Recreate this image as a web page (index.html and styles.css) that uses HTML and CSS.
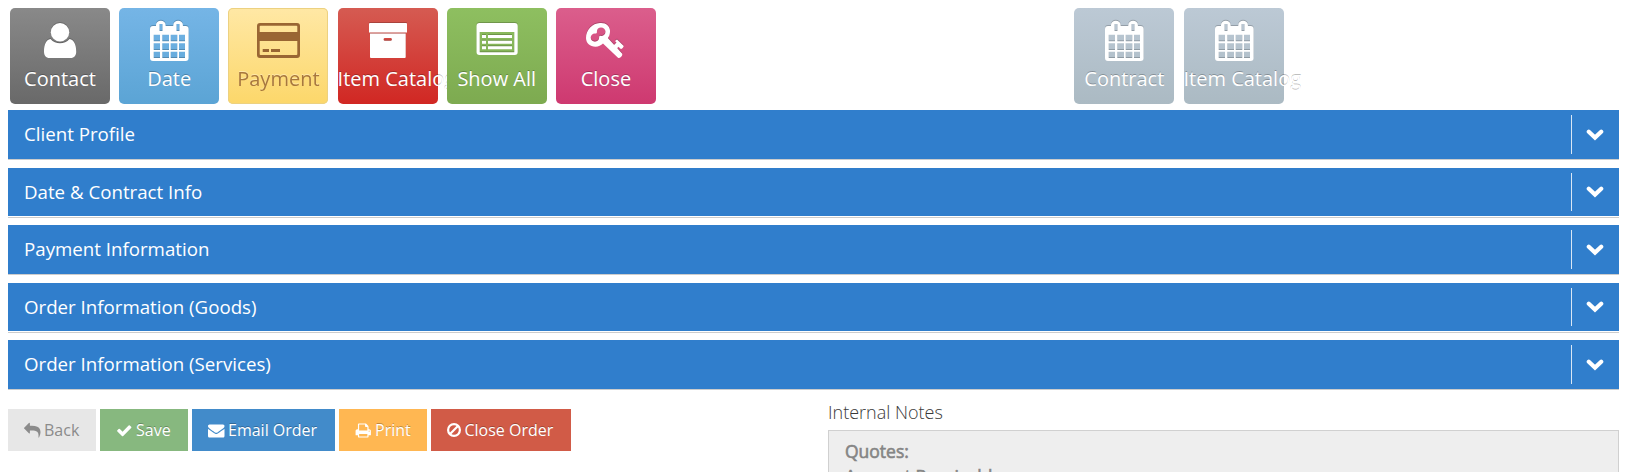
FILE: index.html
```
<!DOCTYPE html>
<html lang="en">
<head>
    <meta charset="UTF-8">
    <meta name="viewport" content="width=device-width, initial-scale=1.0">
    <title>Order</title>
    <link rel="stylesheet" href="styles.css">
</head>
<body>
    <!-- shared icons -->
    <svg class="icons">
        <symbol id="calendar" viewBox="0 0 48 42">
            <path fill-rule="evenodd" d="M8 6h3V5a4.800 4.200 0 0 1 9.600 0V6h7.700V5a4.800 4.200 0 0 1 9.600 0V6h2.700a3 3 0 0 1 3 3v29a3 3 0 0 1-3 3H8a3 3 0 0 1-3-3V9a3 3 0 0 1 3-3zM14.500 4v7h3V4zM31.500 4v7h3V4zM8.700 14.700v6.600H15v-6.600zM17.300 14.700v6.600H24v-6.600zM25.700 14.700v6.600h6.600v-6.600zM34 14.700v6.600h6v-6.600zM8.700 23.300V30H15v-6.700zM17.300 23.300V30H24v-6.700zM25.700 23.300V30h6.600v-6.700zM34 23.300V30h6v-6.700zM8.700 31.700V38H15v-6.300zM17.300 31.700V38H24v-6.300zM25.700 31.700V38h6.600v-6.300zM34 31.700V38h6v-6.300z"/>
        </symbol>
        <symbol id="chevron" viewBox="0 0 18 12">
            <path d="M2.800 2.800L9 8.600l6.200-5.800" fill="none" stroke="#fff" stroke-width="4.200" stroke-linecap="round"/>
        </symbol>
    </svg>

    <div class="toolbar">
        <button class="app grey">
            <svg viewBox="0 0 48 42"><circle cx="24" cy="12.300" r="9.200"/><path d="M14.500 19c2.500 3.200 6 4.200 9.500 4.200s7-1 9.500-4.200c4.500.8 6.700 5.500 6.700 12.500 0 4-2 6.500-5.500 6.500H13.500C10 38 8 35.500 8 31.500 8 24.500 10 19.800 14.500 19z"/></svg>
            <span>Contact</span>
        </button>
        <button class="app blue">
            <svg><use href="#calendar"/></svg>
            <span>Date</span>
        </button>
        <button class="app yellow">
            <svg viewBox="0 0 48 42"><path fill-rule="evenodd" d="M6 3h37a3 3 0 0 1 3 3v29a3 3 0 0 1-3 3H6a3 3 0 0 1-3-3V6a3 3 0 0 1 3-3zM6.500 5.800a.8.800 0 0 0-.8.800V12h37.600V6.600a.8.800 0 0 0-.8-.8zM5.700 21v13.200a.8.800 0 0 0 .8.800h36a.8.800 0 0 0 .8-.8V21zM8.700 29h6.300v3H8.700zM17 29h9v3h-9z"/></svg>
            <span>Payment</span>
        </button>
        <button class="app red">
            <svg viewBox="0 0 48 42"><path fill-rule="evenodd" d="M6 3h36a1 1 0 0 1 1 1v8.500H5V4a1 1 0 0 1 1-1zM6 13.500h35.700V37a1 1 0 0 1-1 1H7a1 1 0 0 1-1-1zM21 18a1.400 1.400 0 0 0 0 2.800h5.500a1.400 1.400 0 0 0 0-2.800z"/></svg>
            <span>Item Catalog</span>
        </button>
        <button class="app green">
            <svg viewBox="0 0 48 42"><path fill-rule="evenodd" d="M6.500 3h35.200a3 3 0 0 1 3 3v26a3 3 0 0 1-3 3H6.500a3 3 0 0 1-3-3V6a3 3 0 0 1 3-3zM6.700 12v20.300h34.600V12z"/><path d="M9 15h4v3H9zM15 15h24v3H15zM9 20.700h4v3H9zM15 20.700h24v3H15zM9 26.300h4v3H9zM15 26.300h24v3H15z"/></svg>
            <span>Show All</span>
        </button>
        <button class="app pink">
            <svg viewBox="0 0 48 42"><path fill-rule="evenodd" d="M18 3c6-.5 10.500 3.500 10 9-.2 2.700-1 4.500-2.200 6L40 33.500c1.300 1.800-2 5.300-4 4.300L21 23.500c-2 2-4.500 3.200-7.500 3.200C8 26.700 4 23 4 18 4 10 10.500 3.300 18 3zM19 7.500c-2.700 0-4.500 2-4 4.500-.2 1-.7 1.500-1.500 1.500-2.500-.4-4.800 1.500-4.800 4 0 2.300 1.800 4.200 4.200 4.200 2.800 0 4.500-1.800 4.200-4.500.2-1 .8-1.500 1.600-1.300 2.600.3 4.800-1.500 4.800-4.200 0-2.400-2-4.200-4.500-4.200z"/><path d="M29 28l5.500-5.500-1.500-1.500 2-1.500 6.500 6.300c.8.800-2 3.800-3 3l-2-2-1.500 1.500 1.300 1.500L34 32z"/></svg>
            <span>Close</span>
        </button>
        <div class="toolbar-right">
            <button class="app light">
                <svg><use href="#calendar"/></svg>
                <span>Contract</span>
            </button>
            <button class="app light">
                <svg><use href="#calendar"/></svg>
                <span>Item Catalog</span>
            </button>
        </div>
    </div>

    <div class="panels">
        <div class="panel">
            <h5>Client Profile</h5>
            <a class="toggle"><svg><use href="#chevron"/></svg></a>
        </div>
        <div class="panel short">
            <h5>Date &amp; Contract Info</h5>
            <a class="toggle"><svg><use href="#chevron"/></svg></a>
        </div>
        <div class="panel">
            <h5>Payment Information</h5>
            <a class="toggle"><svg><use href="#chevron"/></svg></a>
        </div>
        <div class="panel short">
            <h5>Order Information (Goods)</h5>
            <a class="toggle"><svg><use href="#chevron"/></svg></a>
        </div>
        <div class="panel">
            <h5>Order Information (Services)</h5>
            <a class="toggle"><svg><use href="#chevron"/></svg></a>
        </div>
    </div>

    <div class="footer">
        <div class="actions">
            <button class="btn back">
                <svg viewBox="0 0 1792 1792"><path d="M1792 1120q0 166-127 451-3 7-10.500 24t-13.500 30-13 22q-12 17-28 17-15 0-23.500-10t-8.500-25q0-9 2.500-26.500t2.500-23.500q5-68 5-123 0-101-17.500-181t-48.500-138.500-80-101-105.500-69.500-133-42.500-154-21.500-175.500-6h-224v256q0 26-19 45t-45 19-45-19l-512-512q-19-19-19-45t19-45l512-512q19-19 45-19t45 19 19 45v256h224q713 0 875 403 53 134 53 333z"/></svg>
                Back
            </button>
            <button class="btn save">
                <svg viewBox="0 0 1792 1792"><path d="M1671 566q0 40-28 68l-724 724-136 136q-28 28-68 28t-68-28l-136-136-362-362q-28-28-28-68t28-68l136-136q28-28 68-28t68 28l294 295 656-657q28-28 68-28t68 28l136 136q28 28 28 68z"/></svg>
                Save
            </button>
            <button class="btn email">
                <svg viewBox="0 0 1792 1792"><path d="M1792 710v794q0 66-47 113t-113 47h-1472q-66 0-113-47t-47-113v-794q44 49 101 87 362 246 497 345 57 42 92.500 65.500t94.500 48 110 24.500h2q51 0 110-24.500t94.500-48 92.500-65.500q170-123 498-345 57-39 100-87zm0-294q0 79-49 151t-122 123q-376 261-468 325-10 7-42.500 31t-54 38.500-52 32.500-57.500 27-50 9h-2q-23 0-50-9t-57.500-27-52-32.500-54-38.500-42.500-31q-91-64-262-182.500t-205-142.500q-62-42-117-115.500t-55-136.500q0-78 41.500-130t118.500-52h1472q65 0 112.500 47t47.500 113z"/></svg>
                Email Order
            </button>
            <button class="btn print">
                <svg viewBox="0 0 1792 1792"><path d="M448 1536h896v-256h-896v256zm0-640h896v-384h-160q-40 0-68-28t-28-68v-160h-640v640zm1152 64q0-26-19-45t-45-19-45 19-19 45 19 45 45 19 45-19 19-45zm128 0v416q0 13-9.500 22.500t-22.500 9.500h-224v160q0 40-28 68t-68 28h-960q-40 0-68-28t-28-68v-160h-224q-13 0-22.500-9.500t-9.500-22.500v-416q0-79 56.500-135.500t135.500-56.500h64v-544q0-40 28-68t68-28h672q40 0 88 20t76 48l152 152q28 28 48 76t20 88v256h64q79 0 135.500 56.500t56.500 135.500z"/></svg>
                Print
            </button>
            <button class="btn cancel">
                <svg viewBox="0 0 14 16"><g fill="none" stroke="#fff" stroke-width="2.200"><circle cx="7" cy="8" r="5.900"/><path d="M2.800 12.200l8.400-8.400"/></g></svg>
                Close Order
            </button>
        </div>
        <div class="notes">
            <label>Internal Notes</label>
            <div class="notes-box">
                Quotes:<br>
                Account Receivable:
            </div>
        </div>
    </div>
</body>
</html>
```
FILE: styles.css
```
html {
    overflow: hidden;
}

body {
    display: flex;
    flex-direction: column;
    margin: 0;
    height: 472px;
    overflow: hidden;
    background-color: #fff;
    font-family: "Open Sans", sans-serif;
    color: #393939;
}

.icons {
    display: none;
}

button {
    font-family: inherit;
    border: none;
    cursor: pointer;
}

.toolbar {
    display: flex;
    gap: 9.2px;
    padding: 8px 10px 0;
}

.toolbar-right {
    display: flex;
    gap: 9.2px;
    margin-left: 409.2px;
}

.app {
    display: flex;
    flex-direction: column;
    align-items: center;
    box-sizing: border-box;
    width: 100px;
    height: 96px;
    padding: 12px 0 0;
    border-radius: 5px;
    color: #fff;
    font-size: 20px;
    line-height: 28px;
    white-space: nowrap;
    text-shadow: 0 -1px 0 rgba(0, 0, 0, 0.25);
}

.app svg {
    width: 48px;
    height: 42px;
    fill: currentColor;
    filter: drop-shadow(0 -1px 0 rgba(0, 0, 0, 0.2));
}

.app span {
    max-width: 100px;
    margin-top: 3px;
}

.grey { background: linear-gradient(#898989, #696969); }
.blue { background: linear-gradient(#75b5e6, #5ba4d5); }
.red { background: linear-gradient(#d55b52, #d12723); }
.green { background: linear-gradient(#8ebf60, #7daa50); }
.pink { background: linear-gradient(#db5e8c, #ce3970); }
.light { background: linear-gradient(#bcc9d5, #abbac3); }

.yellow {
    background: linear-gradient(#ffe8a5, #fcd76a);
    box-shadow: inset 0 0 0 1px #ecd181;
    color: #963;
    text-shadow: 0 -1px 0 rgba(255, 255, 255, 0.4);
}

.yellow svg {
    filter: none;
}

.yellow span {
    opacity: 0.85;
}

.panels {
    padding: 6px 10px 0 8px;
}

.panel {
    display: flex;
    justify-content: space-between;
    align-items: center;
    box-sizing: border-box;
    height: 50px;
    margin-bottom: 8px;
    padding-left: 16px;
    border-bottom: 1px solid #ccc;
    background-color: #307ecc;
    color: #fff;
}

.panel.short {
    margin-bottom: 7px;
    padding-bottom: 1px;
    box-shadow: inset 0 -1px #fff;
}

.panel h5 {
    margin: 0;
    padding-bottom: 2px;
    font-size: 18.7px;
    font-weight: normal;
}

.toggle {
    display: flex;
    align-items: center;
    justify-content: center;
    box-sizing: border-box;
    width: 48px;
    height: 39px;
    padding-right: 1px;
    border-left: 1px solid #d9e7f5;
}

.short .toggle {
    height: 38px;
}

.toggle svg {
    width: 18px;
    height: 12px;
}

.footer {
    display: flex;
    flex: 1;
    min-height: 0;
    padding: 3px 10px 0 8px;
    overflow: hidden;
}

.actions {
    display: flex;
    gap: 4px;
    width: 820px;
    padding-top: 8px;
}

.btn {
    display: flex;
    align-items: center;
    gap: 3.5px;
    box-sizing: border-box;
    width: 88px;
    height: 42px;
    padding: 0 0 0 16px;
    color: #fff;
    font-size: 16px;
    white-space: nowrap;
    text-shadow: 0 -1px 0 rgba(0, 0, 0, 0.25);
}

.btn svg {
    width: 16.5px;
    height: 17px;
    fill: currentColor;
}

.back {
    background-color: #e7e7e7;
    color: #8b8b8b;
    text-shadow: none;
}

.save { background-color: #87b87f; }
.print { background-color: #ffb752; }

.email {
    width: 143px;
    background-color: #428bca;
}

.cancel {
    width: 140px;
    background-color: #d15b47;
}

.cancel svg {
    width: 14px;
    height: 16px;
}

.notes {
    flex: 1;
}

.notes label {
    display: block;
    height: 29px;
    font-size: 18px;
    font-weight: 300;
    line-height: 22px;
}

.notes-box {
    height: 100px;
    padding: 8px 16px;
    border: 1px solid #d0d0d0;
    background-color: #eee;
    color: #858585;
    font-size: 17.5px;
    line-height: 25px;
    -webkit-text-stroke: 0.6px #858585;
}
```
